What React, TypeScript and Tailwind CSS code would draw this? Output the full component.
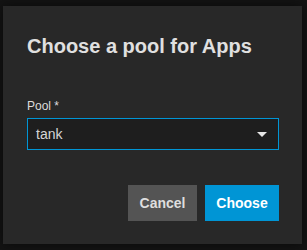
const font = { fontFamily: '"Liberation Sans", Arial, sans-serif' }

export default function App() {
    return (
        <div className="relative h-[250px] w-[307px] overflow-hidden bg-[#141414]" style={font}>
            {/* page behind the overlay */}
            <div className="flex flex-col pt-[48px] -ml-[38px] text-[13px] leading-[21px]">
                <span className="text-[#5f8a9a]">Applic</span>
                <span className="text-[#8a8a8a]">Stats</span>
            </div>

            {/* dialog */}
            <div className="absolute left-[3px] top-[6px] flex h-[238px] w-[299px] flex-col bg-[#282828] px-[24px] pt-[25px] shadow-[0_0_12px_rgba(0,0,0,0.6)]">
                <h1 className="text-[20px] font-bold leading-[30px] text-[#e0e0e0]">
                    Choose a pool for Apps
                </h1>

                <label className="mt-[37px] text-[12px] font-medium leading-[16px] text-[#dcdcdc]">
                    Pool *
                </label>
                <div className="mt-[4px] flex h-[32px] w-[252px] items-center justify-between border border-[#0095d5] bg-[#1e1e1e] pl-[8px] pr-[11px]">
                    <span className="text-[14px] text-[#d6d6d6]">tank</span>
                    <svg width="10" height="5" viewBox="0 0 10 5">
                        <path d="M0 0 L10 0 L5 5 Z" fill="#e6e6e6" />
                    </svg>
                </div>

                <div className="mt-[35px] flex w-[252px] justify-end gap-[8px]">
                    <button className="h-[36px] w-[69px] bg-[#545454] text-[14px] font-bold text-[#dedede]">
                        Cancel
                    </button>
                    <button className="h-[36px] w-[74px] bg-[#0095d5] text-[14px] font-bold text-white">
                        Choose
                    </button>
                </div>
            </div>
        </div>
    )
}
